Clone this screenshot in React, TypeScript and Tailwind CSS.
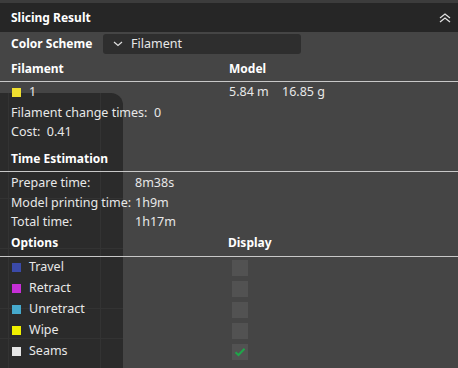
import React from "react";

const font = { fontFamily: '"Noto Sans", "Open Sans", sans-serif' };

function Swatch({ color }: { color: string }) {
  return <span className="inline-block w-[9px] h-[9px] shrink-0" style={{ backgroundColor: color }} />;
}

function Check({ on }: { on?: boolean }) {
  return (
    <span className="w-[16px] h-[16px] bg-[#525252] flex items-center justify-center">
      {on && (
        <svg width="12" height="10" viewBox="0 0 12 10">
          <path d="M1.5 5.2 L4.5 8 L10.5 1.8" stroke="#1fa64a" strokeWidth="2" fill="none" />
        </svg>
      )}
    </span>
  );
}

export default function App() {
  const options = [
    { name: "Travel", color: "#3b4aa8", on: false },
    { name: "Retract", color: "#c62fd6", on: false },
    { name: "Unretract", color: "#46a9cc", on: false },
    { name: "Wipe", color: "#f0f000", on: false },
    { name: "Seams", color: "#e6e6e6", on: true },
  ];
  return (
    <div className="w-[458px] h-[368px] relative overflow-hidden bg-[#454545] text-[12.5px] text-[#e8e8e8] whitespace-nowrap" style={font}>
      {/* background scene visible through panel */}
      <div className="absolute left-0 top-[93px] w-[123px] h-[300px] bg-[#2b2b2b] rounded-tr-[12px]">
        <div className="absolute left-[8px] top-0 bottom-0 w-px bg-[#333333]" />
        <div className="absolute left-[100px] top-0 bottom-0 w-px bg-[#333333]" />
        <div className="absolute left-0 right-0 top-[105px] h-px bg-[#333333]" />
        <div className="absolute left-0 right-0 top-[155px] h-px bg-[#333333]" />
        <div className="absolute left-0 right-0 top-[215px] h-px bg-[#333333]" />
        <div className="absolute left-0 right-0 top-[245px] h-px bg-[#333333]" />
      </div>
      <div className="relative flex flex-col">
        <div className="h-[3px] bg-[#3c3c3c]" />
        <div className="h-[29px] bg-[#262626] flex items-center justify-between pl-[11px] pr-[6px]">
          <span className="font-bold text-white text-[12px]">Slicing Result</span>
          <svg width="14" height="12" viewBox="0 0 14 12">
            <path d="M2 6 L7 2 L12 6 M2 10 L7 6 L12 10" stroke="#e0e0e0" strokeWidth="1.3" fill="none" />
          </svg>
        </div>
        <div className="flex items-center h-[24px] pl-[11px]">
          <span className="font-bold text-white text-[12px] w-[92px]">Color Scheme</span>
          <div className="w-[198px] h-[20px] bg-[#2e2e2e] rounded-[3px] flex items-center pl-[10px] gap-[8px]">
            <svg width="10" height="6" viewBox="0 0 10 6">
              <path d="M1 1 L5 4.5 L9 1" stroke="#e0e0e0" strokeWidth="1.2" fill="none" />
            </svg>
            <span>Filament</span>
          </div>
        </div>
        <div className="flex h-[24px] mt-[2px] items-end pb-[3px] font-bold text-white text-[12px] border-b border-[#c8c8c8]">
          <span className="pl-[11px] w-[229px]">Filament</span>
          <span>Model</span>
        </div>
        <div className="flex h-[21px] items-center">
          <div className="pl-[12px] w-[229px] flex items-center gap-[8px]">
            <Swatch color="#f0e030" />
            <span>1</span>
          </div>
          <span className="w-[53px]">5.84 m</span>
          <span>16.85 g</span>
        </div>
        <div className="h-[20px] flex items-center pl-[11px]">Filament change times:&nbsp;&nbsp;0</div>
        <div className="h-[19px] flex items-center pl-[11px]">Cost:&nbsp;&nbsp;0.41</div>
        <div className="h-[30px] flex items-end pb-[3px] pl-[11px] font-bold text-white text-[12px] border-b border-[#c8c8c8]">
          Time Estimation
        </div>
        <div className="flex flex-col pt-[2px]">
          {[
            ["Prepare time:", "8m38s"],
            ["Model printing time:", "1h9m"],
            ["Total time:", "1h17m"],
          ].map(([k, v]) => (
            <div key={k} className="h-[19.5px] flex items-center pl-[11px]">
              <span className="w-[124px]">{k}</span>
              <span>{v}</span>
            </div>
          ))}
        </div>
        <div className="flex h-[24.5px] items-end pb-[4px] font-bold text-white text-[12px] border-b border-[#c8c8c8]">
          <span className="pl-[11px] w-[228px]">Options</span>
          <span>Display</span>
        </div>
        {options.map((o) => (
          <div key={o.name} className="flex h-[21px] items-center">
            <div className="pl-[12px] w-[232px] flex items-center gap-[8px]">
              <Swatch color={o.color} />
              <span>{o.name}</span>
            </div>
            <Check on={o.on} />
          </div>
        ))}
      </div>
    </div>
  );
}
